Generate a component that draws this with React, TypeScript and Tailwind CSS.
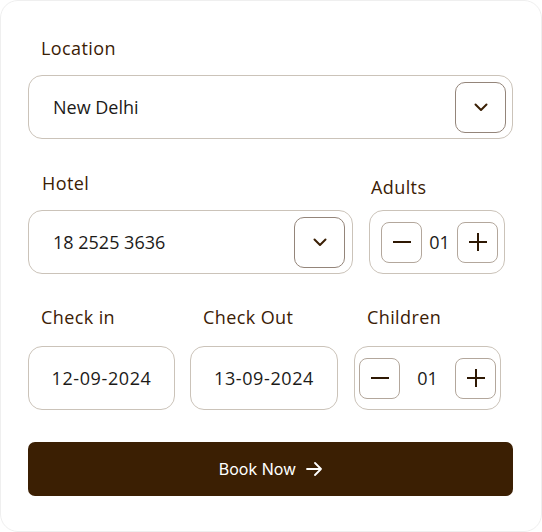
import React from "react";

const labelCls = "block text-[18px] leading-6 font-medium tracking-[0.4px] text-[#3b2005]";
const boxCls = "h-[64px] rounded-[14px] border border-[#cbc3b9] bg-white";

function Chevron() {
  return (
    <svg width="14" height="9" viewBox="0 0 14 9" fill="none">
      <path d="M1.5 1.5 7 7l5.5-5.5" stroke="#3b2005" strokeWidth="2" strokeLinecap="round" strokeLinejoin="round" />
    </svg>
  );
}

function Select({ value, width, pad }: { value: string; width: string; pad: string }) {
  return (
    <div className={`${boxCls} ${width} ${pad} flex items-center justify-between pl-6`}>
      <span className="text-[18px] text-[#1c1a18]">{value}</span>
      <button className="w-[51px] h-[51px] rounded-[10px] border border-[#94857a] flex items-center justify-center">
        <Chevron />
      </button>
    </div>
  );
}

function StepBtn({ plus }: { plus?: boolean }) {
  return (
    <button className="w-[41px] h-[41px] rounded-[8px] border border-[#b3a79c] flex items-center justify-center">
      <svg width="20" height="20" viewBox="0 0 20 20" fill="none">
        <path d="M1 10h18" stroke="#2e1803" strokeWidth="2" />
        {plus && <path d="M10 1v18" stroke="#2e1803" strokeWidth="2" />}
      </svg>
    </button>
  );
}

function Stepper({ pad, width }: { pad: string; width: string }) {
  return (
    <div className={`${boxCls} ${width} ${pad} flex items-center justify-between`}>
      <StepBtn />
      <span className="text-[18px] text-[#1c1a18]">01</span>
      <StepBtn plus />
    </div>
  );
}

function DateBox({ value, width }: { value: string; width: string }) {
  return (
    <div className={`${boxCls} ${width} flex items-center justify-center`}>
      <span className="text-[18px] tracking-[0.6px] text-[#1c1a18]">{value}</span>
    </div>
  );
}

export default function App() {
  return (
    <div
      className="w-[542px] h-[532px] bg-white rounded-[18px] border border-[#efefef] pl-[27px] pt-[35px]"
      style={{ fontFamily: "'Open Sans', 'Liberation Sans', sans-serif" }}
    >
      <label className={`${labelCls} ml-[13px] mb-[15px]`}>Location</label>
      <Select value="New Delhi" width="w-[485px]" pad="pr-[6px]" />

      <div className="flex gap-[16px] mt-[32px]">
        <div>
          <label className={`${labelCls} ml-[14px] mb-[15px]`}>Hotel</label>
          <Select value="18 2525 3636" width="w-[325px]" pad="pr-[7px]" />
        </div>
        <div className="flex flex-col justify-end">
          <label className={`${labelCls} ml-[2px] mb-[11px]`}>Adults</label>
          <Stepper pad="pl-[11px] pr-[6px]" width="w-[136px]" />
        </div>
      </div>

      <div className="flex mt-[31px]">
        <div>
          <label className={`${labelCls} ml-[13px] mb-[17px]`}>Check in</label>
          <DateBox value="12-09-2024" width="w-[147px]" />
        </div>
        <div className="ml-[15px]">
          <label className={`${labelCls} ml-[13px] mb-[17px]`}>Check Out</label>
          <DateBox value="13-09-2024" width="w-[148px]" />
        </div>
        <div className="ml-[16px]">
          <label className={`${labelCls} ml-[13px] mb-[17px]`}>Children</label>
          <Stepper pad="pl-[4px] pr-[4px]" width="w-[147px]" />
        </div>
      </div>

      <button
        className="mt-[32px] w-[485px] h-[54px] rounded-[7px] bg-[#3b1f03] flex items-center justify-center gap-[10px] text-white text-[16px]"
        style={{ fontFamily: "Inter, sans-serif" }}
      >
        Book Now
        <svg width="16" height="14" viewBox="0 0 16 14" fill="none">
          <path d="M1 7h14M9 1l6 6-6 6" stroke="white" strokeWidth="1.8" strokeLinecap="round" strokeLinejoin="round" />
        </svg>
      </button>
    </div>
  );
}
